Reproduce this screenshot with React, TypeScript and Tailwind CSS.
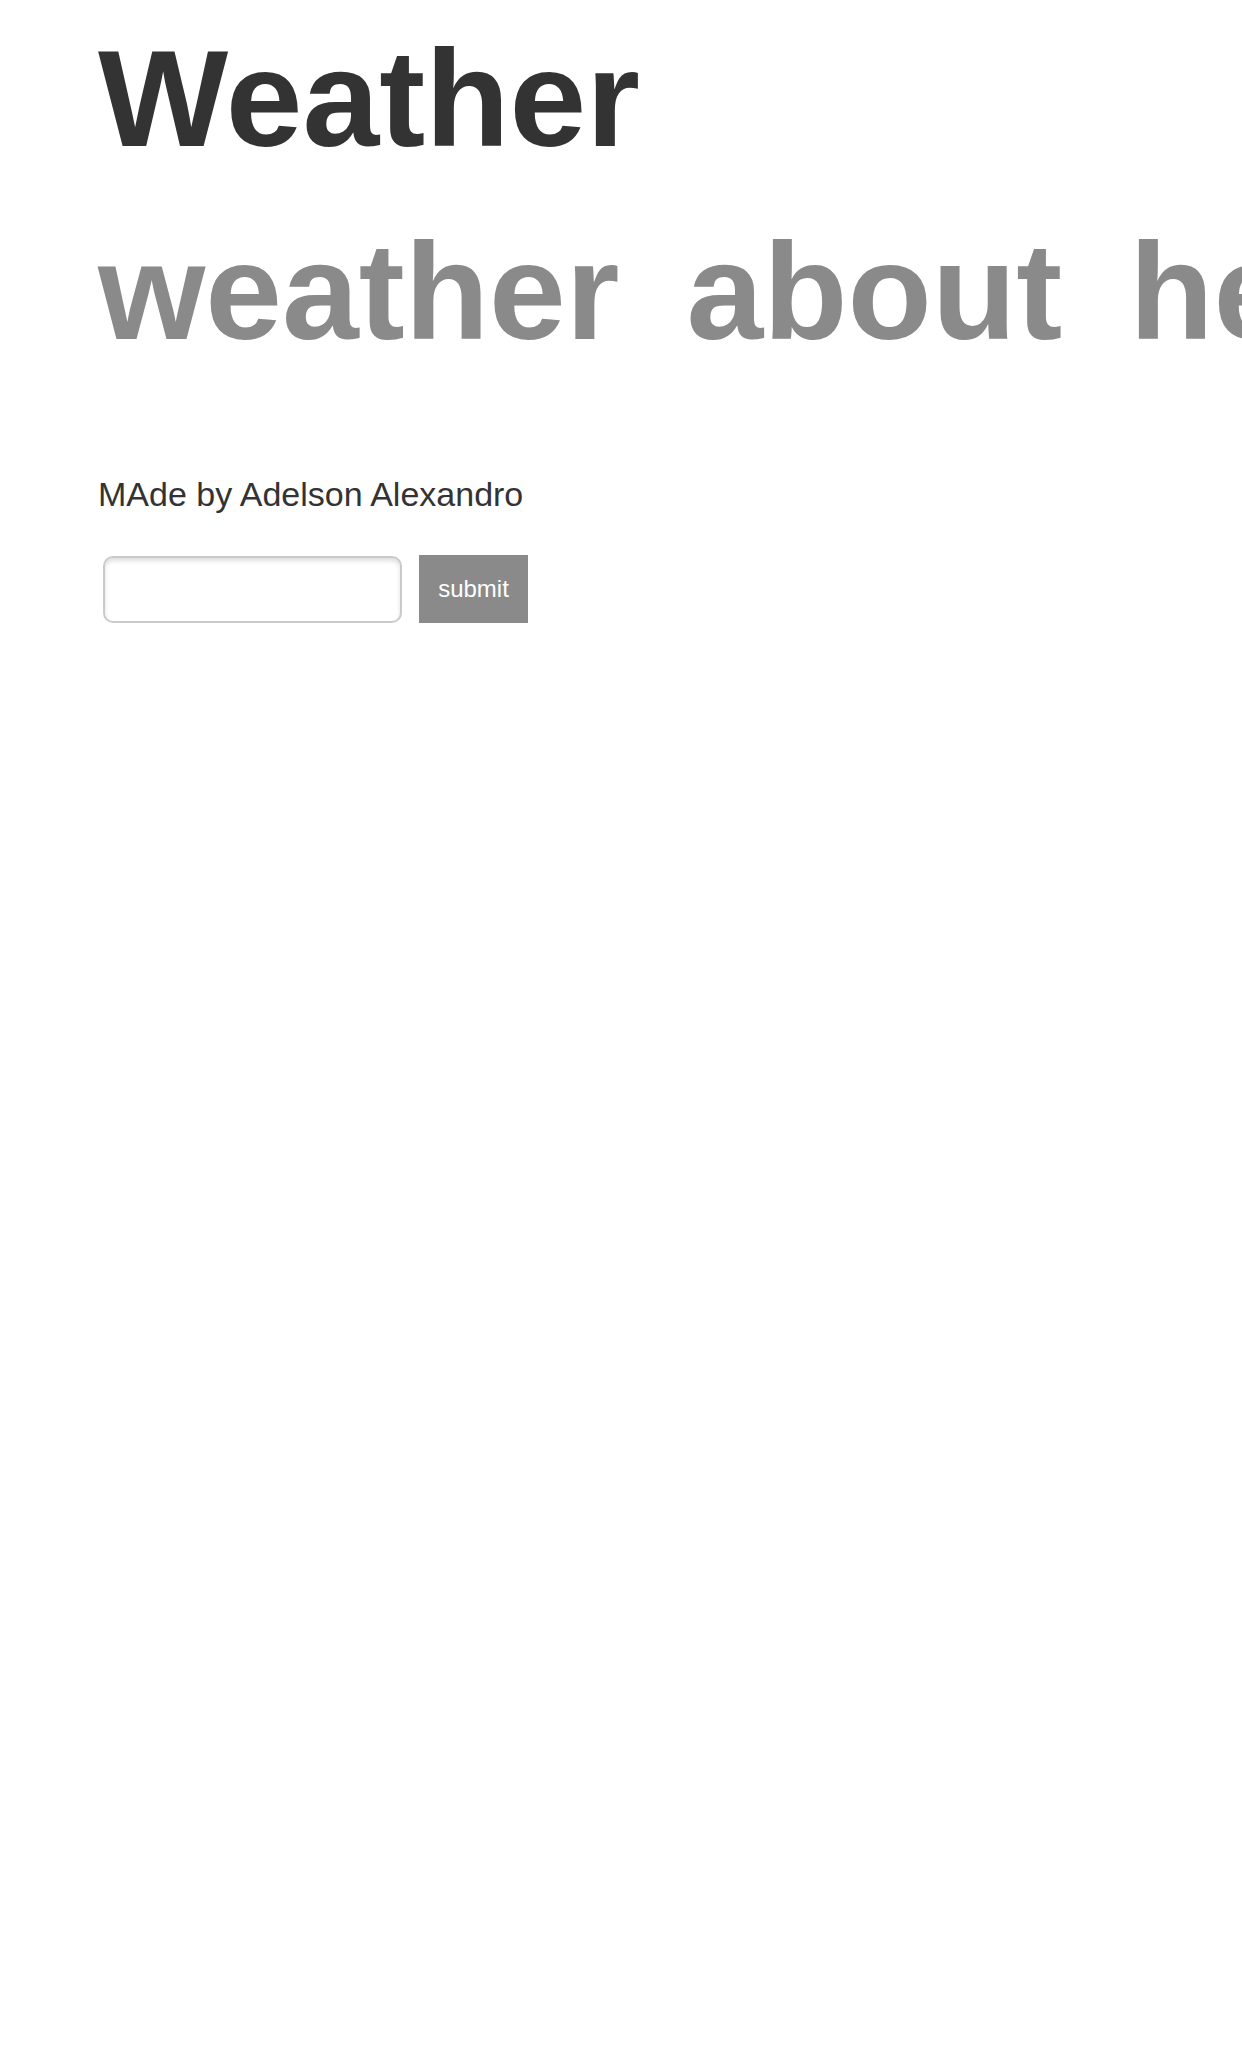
const Weather = () => {
  return (
    <div className="min-h-screen w-full overflow-hidden bg-white pl-[98px] pt-[29px] font-['Liberation_Sans',Arial,sans-serif]">
      <h1 className="text-[138px] leading-[138px] font-bold text-[#333333]">Weather</h1>

      <nav className="mt-[55px] flex gap-[67px] whitespace-nowrap text-[138px] leading-[138px] font-bold text-[#8a8a8a]">
        <a className="shrink-0">weather</a>
        <a className="shrink-0">about</a>
        <a className="shrink-0">help</a>
      </nav>

      <p className="mt-[115px] text-[34px] leading-[39px] text-[#333333]">MAde by Adelson Alexandro</p>

      <form className="mt-[41px] flex items-start gap-[17px]" onSubmit={(e) => e.preventDefault()}>
        <input
          type="text"
          className="ml-[5px] mt-px h-[67px] w-[299px] rounded-[10px] border-2 border-[#cacaca] bg-white px-3 text-[24px] shadow-[inset_0_3px_4px_rgba(0,0,0,0.13)] outline-none"
        />
        <button type="submit" className="h-[68px] w-[109px] bg-[#8a8a8a] text-[24px] text-white">
          submit
        </button>
      </form>
    </div>
  )
}

export default Weather
